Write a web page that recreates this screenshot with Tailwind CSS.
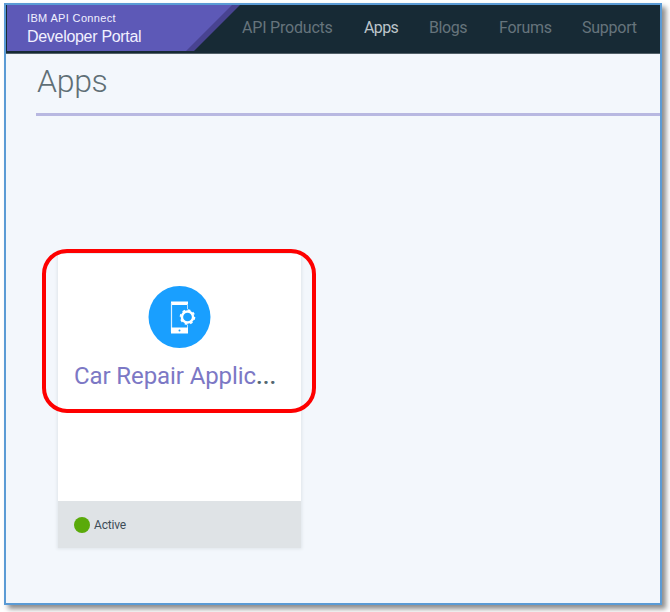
<!DOCTYPE html>
<html lang="en">
<head>
<meta charset="utf-8">
<title>Developer Portal</title>
<script src="https://cdn.jsdelivr.net/npm/@tailwindcss/browser@4"></script>
</head>
<body class="h-[612px] w-[670px] overflow-hidden bg-white pt-[3px] pl-1 font-['Roboto',sans-serif]">
<div class="h-[602px] w-[658px] border-2 border-[#5b9bd5] bg-[#f3f7fc] shadow-[4px_4px_5px_rgba(0,0,0,0.45)]">
  <header class="flex h-[49px] border-b border-[#526069] bg-[#172a35]">
    <div class="relative h-12 w-[236px] shrink-0">
      <svg class="absolute inset-0" width="236" height="48" viewBox="0 0 236 48"><path d="M1 0H234L188 46H1Z" fill="#484391"/><path d="M1 0H226L180 46H1Z" fill="#5d59b7"/></svg>
      <div class="relative flex flex-col pt-[7px] pl-[21px] font-['Liberation_Sans',sans-serif] whitespace-nowrap text-[#f1f0ff]">
        <span class="text-[11px] leading-[13px] tracking-[0.35px]">IBM API Connect</span>
        <span class="mt-[2px] text-[16px] leading-[20px] tracking-[-0.3px]">Developer Portal</span>
      </div>
    </div>
    <nav class="flex text-[16px] leading-[45px] whitespace-nowrap text-[#66747c]">
      <a class="w-[122px] tracking-[-0.2px]">API Products</a>
      <a class="w-[65px] tracking-[-0.6px] text-[#bdc5ca]">Apps</a>
      <a class="w-[70px] tracking-[-0.4px]">Blogs</a>
      <a class="w-[83px] tracking-[-0.25px]">Forums</a>
      <a class="tracking-[-0.25px]">Support</a>
    </nav>
  </header>
  <main class="pl-[30px]">
    <h1 class="h-[62px] border-b-3 border-[#b8b8e1] pt-[7px] pl-px text-[32px] leading-[40px] font-light tracking-[-0.3px] text-[#5f6f76]">Apps</h1>
    <div class="relative mt-[138px] ml-[22px] h-[294px] w-[243px] bg-white shadow-[0_0_3px_1px_#dfe5ea]">
      <div class="flex h-[247px] flex-col items-center pt-[32px]">
        <svg class="overflow-visible" width="62" height="62" viewBox="0 0 62 62">
          <circle cx="30.5" cy="31" r="31" fill="#199fff"/>
          <path d="M22 15.5H39V19H22Z" fill="#fff"/>
          <path d="M22.5 17V46" stroke="#d9efff" stroke-width="1.2"/>
          <path d="M38.5 18V24M38.5 37V43" stroke="#b9e1ff" stroke-width="1"/>
          <path d="M22 41.5H39V47.5H22Z" fill="#fff"/>
          <circle cx="30.5" cy="44.5" r="1" fill="#199fff"/>
          <circle cx="38.5" cy="31" r="8" fill="#199fff"/>
          <circle cx="38.5" cy="31" r="7" fill="none" stroke="#fff" stroke-width="1.6" stroke-dasharray="2.75 2.75"/>
          <circle cx="38.5" cy="31" r="5.6" fill="none" stroke="#fff" stroke-width="2.5"/>
        </svg>
        <h2 class="mt-[12px] w-full pl-[16px] text-[24px] leading-[32px] tracking-[-0.1px] whitespace-nowrap text-[#7c78c5]">Car Repair Applic<span class="font-medium tracking-[0.1px] text-[#52666f]">...</span></h2>
      </div>
      <div class="flex h-[47px] items-center bg-[#dfe3e6] pl-[16px]">
        <span class="size-4 rounded-full bg-[#5aaa0a]"></span>
        <span class="ml-1 text-[12px] leading-4 tracking-[-0.2px] text-[#3d4d57]">Active</span>
      </div>
      <div class="absolute -top-[5px] -left-[16px] h-[164px] w-[274px] rounded-[25px] border-4 border-[#fe0000]"></div>
    </div>
  </main>
</div>
</body>
</html>
